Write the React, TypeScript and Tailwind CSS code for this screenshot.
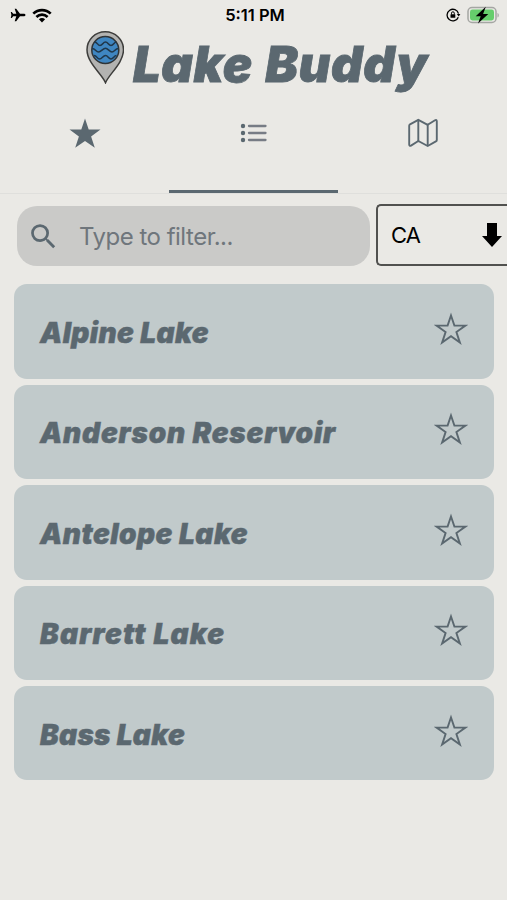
import type { ReactNode } from 'react';
import { MdSearch } from 'react-icons/md';
import { clsx } from 'clsx';

type Lake = { name: string; spacing: string };

const lakes: Lake[] = [
  { name: 'Alpine Lake', spacing: 'tracking-[0.4px]' },
  { name: 'Anderson Reservoir', spacing: 'tracking-[0.8px]' },
  { name: 'Antelope Lake', spacing: 'tracking-[0.5px]' },
  { name: 'Barrett Lake', spacing: 'tracking-[1.2px]' },
  { name: 'Bass Lake', spacing: 'tracking-[0.3px]' },
];

function StatusBar() {
  return (
    <div className="grid h-[30px] grid-cols-3 items-center pl-[10px] pr-[7px] text-black">
      <div className="flex items-center gap-[6px]">
        <svg className="h-4 w-4" viewBox="0 0 16 16" fill="currentColor">
          <path d="M15.5 8c0-.9-1-1.3-2-1.3H10L6.2 1.8H4.7l1.6 4.9H3.2L1.8 5H.8L1.4 8l-.6 3h1l1.4-1.7h3.1l-1.6 4.9h1.5l3.8-4.9h3.5c1 0 2-.4 2-1.3z" />
        </svg>
        <svg className="h-[15px] w-5" viewBox="0 0 20 15" fill="none" stroke="currentColor" strokeWidth="2.7">
          <path d="M1.3 5.6C6.2.9 13.8.9 18.7 5.6" />
          <path d="M4.4 8.9c3.2-3 8-3 11.2 0" />
          <path d="M10 14.4 6.9 11.3c1.7-1.6 4.5-1.6 6.2 0z" fill="currentColor" stroke="none" />
        </svg>
      </div>
      <p className="text-center font-['Inter'] text-[16.5px] font-semibold leading-none">5:11 PM</p>
      <div className="flex items-center justify-end gap-[6px]">
        <svg className="h-[14px] w-[15px]" viewBox="0 0 15 14" fill="none" stroke="currentColor">
          <path d="M12.3 9.2A5.8 5.8 0 1 1 12.5 5.6" strokeWidth="1.3" />
          <path d="m10.8 6.1 3.6-.1-1.7 2.6z" fill="currentColor" stroke="none" />
          <rect x="4.5" y="6.2" width="4.8" height="3.6" rx=".5" fill="currentColor" stroke="none" />
          <path d="M5.5 6.5V5.2a1.4 1.4 0 0 1 2.8 0v1.3" strokeWidth="1" />
        </svg>
        <svg className="h-[19px] w-[33px]" viewBox="0 0 33 19">
          <rect x="1" y="1.5" width="28" height="15" rx="4" fill="none" stroke="#a5a6a3" strokeWidth="1.5" />
          <rect x="3" y="3.5" width="24" height="11" rx="2.4" fill="#66ce6c" />
          <path d="M30.5 7v4.6c1.8-.7 1.8-3.9 0-4.6z" fill="#a5a6a3" />
          <path d="M18.8.8 8.7 10.3h5L11 17.5l10.3-9.4h-5.2z" fill="#000" />
        </svg>
      </div>
    </div>
  );
}

function LogoPin() {
  return (
    <svg className="mt-[1px] h-[53px] w-[38px] shrink-0" viewBox="0 0 38 53">
      <path
        d="M19.5 51.7C16 43 1 32 1 18.8a18 17.8 0 0 1 36.5 0C37.5 32 23 43 19.5 51.7z"
        fill="#b3b3b1"
        stroke="#3d3d3b"
        strokeWidth="1.5"
      />
      <circle cx="19.3" cy="19" r="13.5" fill="#3f86c1" stroke="#2f3437" strokeWidth="1.5" />
      <g fill="none" stroke="#20374a" strokeWidth="1.6" strokeLinejoin="round">
        <path d="M8.5 11c3 0 3 3.5 5.5 3.5s3-3.5 5.5-3.5 3 3.5 5.5 3.5 3-3.5 5.5-3.5" />
        <path d="M6 17.500c3.500 0 4 3.500 6.500 3.500s4.500-3.800 7-3.800S23.500 21 26 21s3-3.500 6.500-3.500" />
        <path d="M8 24.500c3 0 3 3.500 5.500 3.500s3.500-3.500 6-3.500 3 3.500 5.500 3.500 3-3.500 5.500-3.500" />
      </g>
    </svg>
  );
}

function Header() {
  return (
    <header className="flex h-[66px] pl-[86px]">
      <LogoPin />
      <h1 className="ml-[9px] mt-[5px] whitespace-nowrap font-['Inter'] text-[49px] font-black italic leading-[60px] tracking-[0.6px] [word-spacing:2px] [-webkit-text-stroke:0.8px_#5b6870]">
        Lake Buddy
      </h1>
    </header>
  );
}

function Tab({ active, children }: { active?: boolean; children: ReactNode }) {
  return (
    <button
      className={clsx(
        'flex flex-1 justify-center border-b-[3px] pt-[21px]',
        active ? 'border-[#5b6870]' : 'border-transparent',
      )}
    >
      {children}
    </button>
  );
}

function Tabs() {
  return (
    <nav className="flex h-[98px] border-b border-[#dfdfdc]">
      <Tab>
        <svg className="h-8 w-8" viewBox="0 0 32 32" fill="currentColor">
          <path d="m16 1.5 3.7 11H31.500l-9.400 6.900 3.700 11.300L16 23.900l-9.800 6.800L9.900 19.400.5 12.500h11.800z" />
        </svg>
      </Tab>
      <Tab active>
        <svg className="h-8 w-8" viewBox="0 0 32 32" fill="currentColor">
          <circle cx="5" cy="9" r="2.2" />
          <circle cx="5" cy="16" r="2.2" />
          <circle cx="5" cy="23" r="2.2" />
          <path d="M11 9h16.500M11 16h16.500M11 23h16.500" stroke="#777c85" strokeWidth="2.3" strokeLinecap="round" />
        </svg>
      </Tab>
      <Tab>
        <svg
          className="h-8 w-8"
          viewBox="0 0 32 32"
          fill="none"
          stroke="currentColor"
          strokeWidth="1.9"
          strokeLinejoin="round"
        >
          <path d="M11.3 2.8 3 7.3Q2.2 7.8 2.2 8.8V27.5Q2.3 29.5 4 28.6L11.3 24l9.4 5 8.2-4.600Q29.8 24 29.8 23V4.300Q29.7 2.200 28 3.200L20.700 7.800z" />
          <path d="M11.3 2.8V24M20.7 7.8V29" />
        </svg>
      </Tab>
    </nav>
  );
}

function FilterRow() {
  return (
    <div className="flex pl-[17px] pt-[10px]">
      <label className="mt-[2px] flex h-[60px] w-[353px] shrink-0 items-center rounded-[20px] bg-[#cacac8] pl-[10px]">
        <MdSearch className="h-[33px] w-[33px] shrink-0" />
        <input
          className="ml-[19px] w-[240px] bg-transparent font-['Inter'] text-[24px] leading-none tracking-[-0.5px] outline-none placeholder:text-[#6f767c]"
          placeholder="Type to filter..."
        />
      </label>
      <div className="ml-[6px] flex h-[62px] flex-1 items-center justify-between rounded-l-[5px] border-2 border-r-0 border-[#51514f] pl-[13px] pr-[5px] text-black">
        <span className="font-['Inter'] text-[22px] tracking-[-1px]">CA</span>
        <svg className="h-6 w-5" viewBox="0 0 20 24" fill="currentColor">
          <path d="M5 0h10v13h5L10 24 0 13h5z" />
        </svg>
      </div>
    </div>
  );
}

function LakeCard({ lake }: { lake: Lake }) {
  return (
    <li className="flex h-[94.4px] items-center justify-between rounded-[13px] bg-[#c1cacb] pl-[26px] pr-[26px]">
      <span
        className={clsx(
          "whitespace-nowrap pt-[3px] font-['Inter'] text-[28px] font-black italic leading-none [-webkit-text-stroke:0.5px_#5b6870]",
          lake.spacing,
        )}
      >
        {lake.name}
      </span>
      <svg
        className="mb-[5px] h-[34px] w-[34px]"
        viewBox="0 0 34 34"
        fill="none"
        stroke="currentColor"
        strokeWidth="1.9"
      >
        <path d="m17 3.5 3.4 10.100h11L22.400 20l3.500 10.600L17 24.200l-8.900 6.400L11.600 20l-9-6.400h11z" />
      </svg>
    </li>
  );
}

export default function App() {
  return (
    <main className="h-[900px] w-[507px] overflow-hidden bg-[#eae9e5] font-['Inter',sans-serif] text-[#5b6870]">
      <StatusBar />
      <Header />
      <Tabs />
      <FilterRow />
      <ul className="mt-[18.4px] flex flex-col gap-[6px] pl-[14px] pr-[13px]">
        {lakes.map((lake) => (
          <LakeCard key={lake.name} lake={lake} />
        ))}
      </ul>
    </main>
  );
}
